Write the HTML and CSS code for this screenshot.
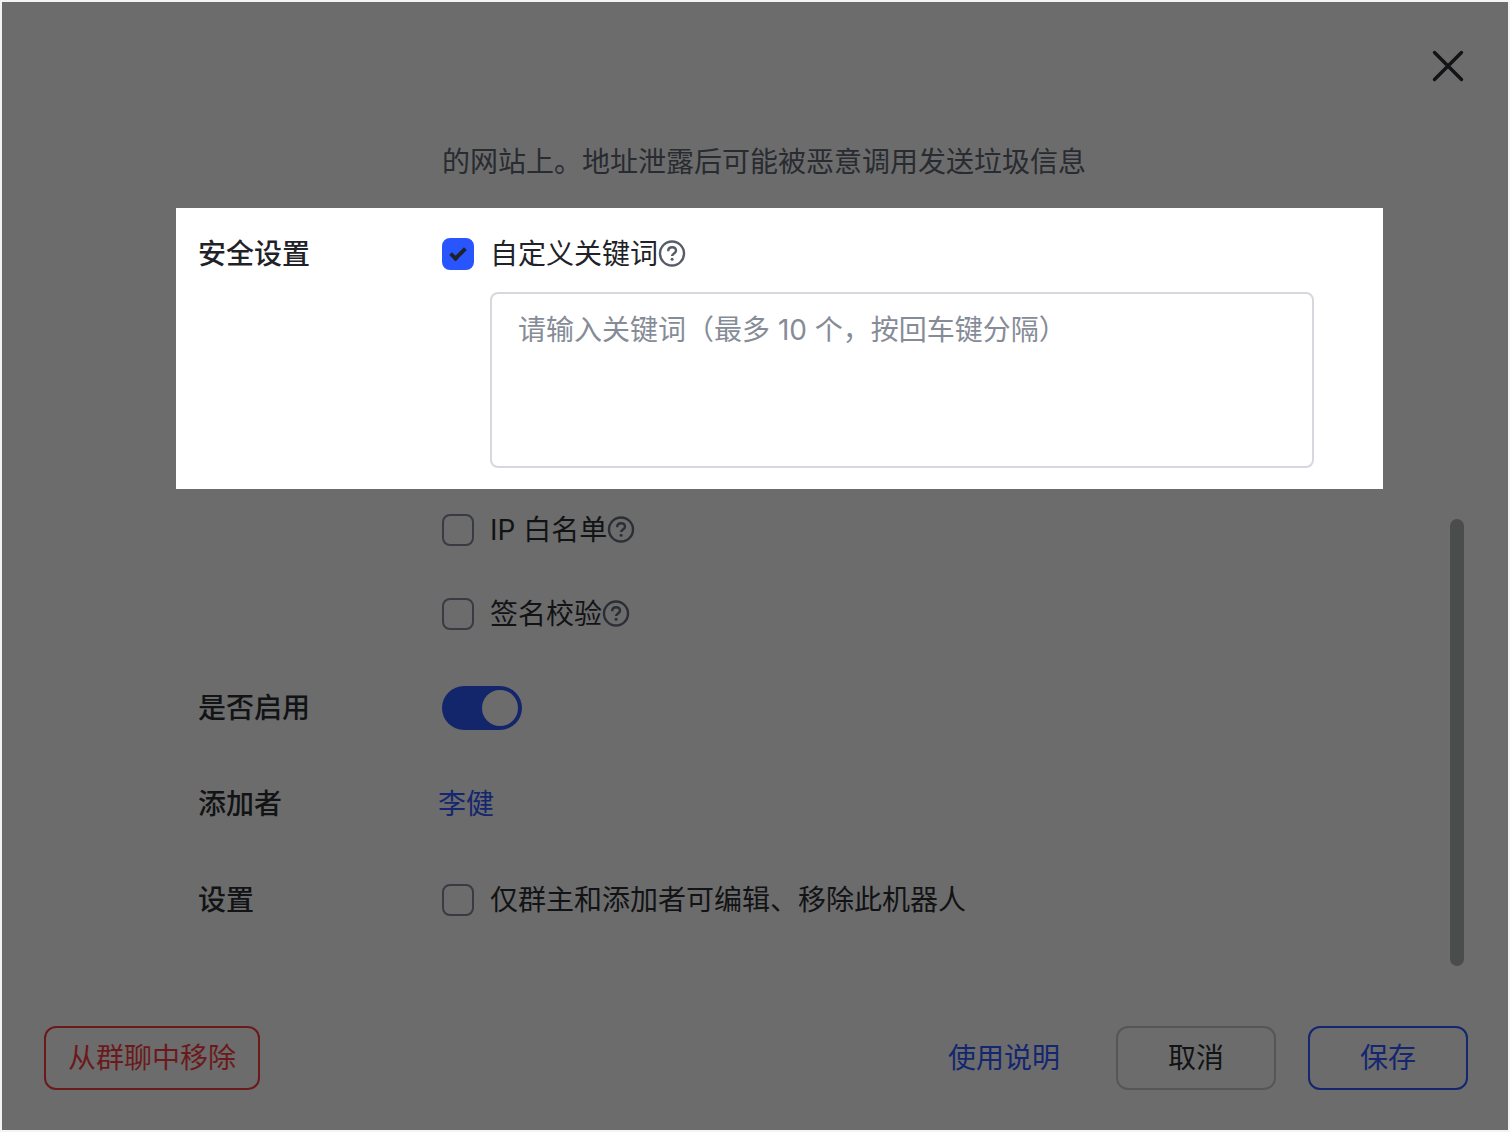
FILE: index.html
```html
<!DOCTYPE html>
<html lang="zh-CN">
  <head>
    <meta charset="UTF-8" />
    <meta name="viewport" content="width=device-width, initial-scale=1.0" />
    <title>机器人设置</title>
    <link rel="stylesheet" href="styles.css" />
  </head>
  <body>
    <svg class="sprite" aria-hidden="true">
      <symbol id="icon-help" viewBox="0 0 28 28">
        <circle cx="14" cy="13.5" r="12" fill="none" stroke="currentColor" stroke-width="2.4" />
        <path d="M10.2 11.2c0-2.400 1.600-3.900 3.900-3.900s3.900 1.500 3.900 3.500c0 2.700-3.900 2.700-3.900 5.300" fill="none" stroke="currentColor" stroke-width="2.4" />
        <circle cx="14.1" cy="19.200" r="1.500" fill="currentColor" />
      </symbol>
    </svg>

    <div class="dialog" role="dialog" aria-label="机器人设置">
      <header class="dialog-header">
        <button type="button" class="close" aria-label="关闭">
          <svg viewBox="0 0 32 32" width="32" height="32">
            <path d="M2.500 2.500l27 27M29.500 2.500l-27 27" fill="none" stroke="currentColor" stroke-width="3.4" stroke-linecap="round" />
          </svg>
        </button>
      </header>

      <main class="dialog-body">
        <div class="row">
          <p class="note">的网站上。地址泄露后可能被恶意调用发送垃圾信息</p>
        </div>

        <section class="row highlight">
          <h2 class="row-label">安全设置</h2>
          <div class="row-content">
            <div class="option">
              <input type="checkbox" class="checkbox" id="keywords" checked />
              <label for="keywords">自定义关键词</label>
              <button type="button" class="help" aria-label="帮助">
                <svg><use href="#icon-help" /></svg>
              </button>
            </div>
            <textarea class="keywords" aria-label="自定义关键词" placeholder="请输入关键词（最多 10 个，按回车键分隔）"></textarea>
          </div>
        </section>

        <div class="row row-options">
          <div class="row-content options">
            <div class="option">
              <input type="checkbox" class="checkbox" id="ip-list" />
              <label for="ip-list">IP 白名单</label>
              <button type="button" class="help" aria-label="帮助">
                <svg><use href="#icon-help" /></svg>
              </button>
            </div>
            <div class="option">
              <input type="checkbox" class="checkbox" id="signature" />
              <label for="signature">签名校验</label>
              <button type="button" class="help" aria-label="帮助">
                <svg><use href="#icon-help" /></svg>
              </button>
            </div>
          </div>
        </div>

        <div class="row">
          <label class="row-label" for="enabled">是否启用</label>
          <div class="row-content">
            <input type="checkbox" role="switch" class="switch" id="enabled" checked />
          </div>
        </div>

        <div class="row">
          <h2 class="row-label">添加者</h2>
          <div class="row-content">
            <a href="#" class="link">李健</a>
          </div>
        </div>

        <div class="row">
          <h2 class="row-label">设置</h2>
          <div class="row-content">
            <div class="option">
              <input type="checkbox" class="checkbox" id="restrict" />
              <label for="restrict">仅群主和添加者可编辑、移除此机器人</label>
            </div>
          </div>
        </div>

        <div class="scrollbar"></div>
      </main>

      <footer class="dialog-footer">
        <button type="button" class="btn btn-danger">从群聊中移除</button>
        <div class="actions">
          <a href="#" class="link">使用说明</a>
          <button type="button" class="btn">取消</button>
          <button type="button" class="btn btn-primary">保存</button>
        </div>
      </footer>
    </div>
  </body>
</html>
```

FILE: styles.css
```css
* {
  box-sizing: border-box;
}
body {
  margin: 0;
  padding: 2px;
  min-height: 100vh;
  display: flex;
  background-color: #f3f4f4;
  color: #121315;
  font-family: Inter, "Noto Sans CJK SC", sans-serif;
  font-size: 28px;
  line-height: 44px;
}
button,
textarea {
  font: inherit;
}
button {
  cursor: pointer;
}
.sprite {
  position: absolute;
  width: 0;
  height: 0;
}
.dialog {
  flex: 1;
  display: flex;
  flex-direction: column;
  background-color: #6c6c6c;
}

/* header */
.dialog-header {
  display: flex;
  justify-content: flex-end;
  padding: 48px 44px 58px;
}
.close {
  display: flex;
  padding: 0;
  border: 0;
  background: none;
  color: inherit;
}

/* body */
.dialog-body {
  position: relative;
  flex: 1;
  padding: 0 125px 0 174px;
}
.row {
  display: grid;
  grid-template-columns: 244px 1fr;
  padding: 0 69px 0 22px;
  margin-bottom: 52px;
}
.row:first-child {
  margin-bottom: 24px;
}
.row-label {
  margin: 0;
  font-size: 28px;
  font-weight: 500;
}
.row-content,
.note {
  grid-column: 2;
}
.note {
  margin: 0;
  color: #282b30;
}
.highlight {
  padding-top: 24px;
  padding-bottom: 21px;
  margin-bottom: 19px;
  background-color: #fff;
  color: #1f2329;
}
.row-options {
  margin-bottom: 50px;
}
.options {
  display: grid;
  gap: 40px;
}
.option {
  display: flex;
  align-items: center;
}
.checkbox {
  appearance: none;
  display: flex;
  justify-content: center;
  align-items: center;
  width: 32px;
  height: 32px;
  margin: 0 16px 0 0;
  border: 2px solid #383c42;
  border-radius: 8px;
}
.checkbox:checked {
  border-color: #2955ff;
  background-color: #2955ff;
}
.checkbox:checked::before {
  content: "";
  width: 12px;
  height: 5px;
  margin-bottom: 4px;
  border: solid #1f2329;
  border-width: 0 0 4px 4px;
  transform: rotate(-45deg);
}
.help {
  display: flex;
  padding: 0;
  border: 0;
  background: none;
  color: #2b2f35;
}
.highlight .help {
  color: #575d68;
}
.help svg {
  width: 28px;
  height: 28px;
}
.keywords {
  display: block;
  width: calc(100% - 48px);
  height: 176px;
  margin: 16px 0 0 48px;
  padding: 14px 26px;
  border: 2px solid #d5d8dd;
  border-radius: 8px;
  background: none;
  resize: none;
}
.keywords::placeholder {
  color: #868c97;
}
.switch {
  appearance: none;
  display: block;
  width: 80px;
  height: 44px;
  margin: 0;
  padding: 4px;
  border-radius: 22px;
  background-color: #444;
}
.switch::before {
  content: "";
  display: block;
  width: 36px;
  height: 36px;
  border-radius: 50%;
  background-color: #6c6c6c;
}
.switch:checked {
  background-color: #14266b;
}
.switch:checked::before {
  margin-left: auto;
}
.link {
  margin: 0 -4px;
  color: #14266f;
  text-decoration: none;
}
.scrollbar {
  position: absolute;
  top: 379px;
  right: 44px;
  bottom: 24px;
  width: 14px;
  border-radius: 7px;
  background-color: #4b4d4c;
}

/* footer */
.dialog-footer {
  display: flex;
  justify-content: space-between;
  padding: 36px 40px 40px 42px;
}
.actions {
  display: flex;
  align-items: center;
  gap: 32px;
}
.actions .link {
  margin-right: 24px;
}
.btn {
  min-width: 160px;
  padding: 8px 22px;
  border: 2px solid #565656;
  border-radius: 12px;
  background: none;
  color: #121315;
}
.btn-danger {
  border-color: #6b1a1c;
  color: #6b1a1c;
}
.btn-primary {
  border-color: #14266f;
  color: #14266f;
}
```
